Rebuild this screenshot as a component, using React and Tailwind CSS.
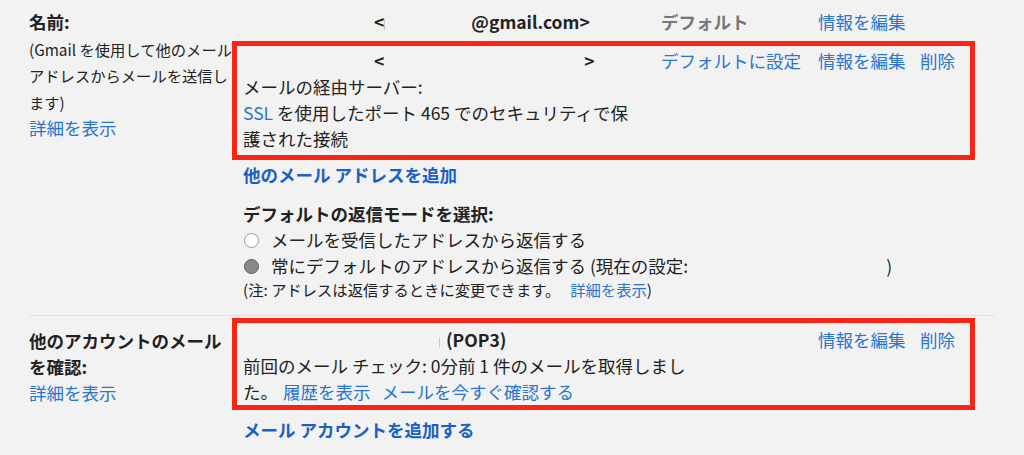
import React from "react";

const LINK = "text-[#2a74d6]";
const BOLDLINK = "text-[#1b5fc9] font-bold";

function Tick() {
  return <span className="inline-block w-px h-[11px] bg-[#c8c8c8] align-middle" />;
}

export default function App() {
  return (
    <div className="min-h-[455px] w-[1024px] bg-[#f2f2f2] font-['Noto_Sans_CJK_JP',sans-serif] text-[#222] pt-[9px] pl-[29px] text-[17.5px] leading-[26px]">
      {/* Section 1 */}
      <div className="flex">
        <div className="w-[203px] shrink-0">
          <div className="font-bold leading-[26.5px]">名前:</div>
          <div className="text-[15.3px] leading-[26.5px]">
            <div>(Gmail を使用して他のメール</div>
            <div>アドレスからメールを送信し</div>
            <div>ます)</div>
          </div>
          <div className={`${LINK} leading-[26.5px]`}>詳細を表示</div>
        </div>
        <div className="flex flex-col">
          {/* Row 1 */}
          <div className="grid grid-cols-[418px_157px_102px_auto] pl-[11px]">
            <div className="whitespace-nowrap font-bold">
              <span className="inline-block w-[131px]" />
              <span>&lt;</span>
              <Tick />
              <span className="inline-block w-[86px]" />
              <span>@gmail.com&gt;</span>
            </div>
            <div className="font-semibold text-[#777]">デフォルト</div>
            <div className={LINK}>情報を編集</div>
            <div />
          </div>
          {/* Box 1 */}
          <div className="mt-[6px] w-[743px] border-[5px] border-[#fb2414] pl-[6px] pt-[2px] pb-[3px]">
            <div className="grid grid-cols-[418px_157px_102px_auto]">
              <div>
                <div className="whitespace-nowrap font-bold">
                  <span className="inline-block w-[131px]" />
                  <span>&lt;</span>
                  <span className="inline-block w-[200px]" />
                  <span>&gt;</span>
                </div>
                <div>メールの経由サーバー:</div>
                <div className="whitespace-nowrap">
                  <span className={LINK}>SSL</span>
                  <span> を使用したポート 465 でのセキュリティで保</span>
                </div>
                <div>護された接続</div>
              </div>
              <div className={`${LINK} whitespace-nowrap`}>デフォルトに設定</div>
              <div className={`${LINK} whitespace-nowrap`}>情報を編集</div>
              <div className={LINK}>削除</div>
            </div>
          </div>
          <div className={`${BOLDLINK} mt-[2px] pl-[11px]`}>他のメール アドレスを追加</div>
          <div className="mt-[13px] pl-[11px]">
            <div className="font-bold">デフォルトの返信モードを選択:</div>
            <div className="flex items-center">
              <span className="ml-px w-[15px] h-[15px] rounded-full border-[1.5px] border-[#9a9a9a] bg-white shrink-0" />
              <span className="ml-[12px]">メールを受信したアドレスから返信する</span>
            </div>
            <div className="flex items-center">
              <span className="ml-px w-[15px] h-[15px] rounded-full border-[1.5px] border-[#5e5e5e] bg-[#8a8a8a] shrink-0" />
              <span className="ml-[12px] whitespace-nowrap">
                常にデフォルトのアドレスから返信する (現在の設定:
                <span className="inline-block w-[198px]" />)
              </span>
            </div>
            <div className="text-[15.3px] leading-[20px] whitespace-nowrap">
              <span>(注: アドレスは返信するときに変更できます。</span>
              <span className={`${LINK} ml-[10px]`}>詳細を表示</span>
              <span>)</span>
            </div>
          </div>
        </div>
      </div>

      {/* Divider */}
      <div className="mt-[16px] w-[966px] h-px bg-[#e2e2e2]" />

      {/* Section 2 */}
      <div className="flex mt-[2px]">
        <div className="w-[203px] shrink-0 pt-[10px]">
          <div className="font-bold">他のアカウントのメール</div>
          <div className="font-bold">を確認:</div>
          <div className={LINK}>詳細を表示</div>
        </div>
        <div className="flex flex-col">
          <div className="w-[743px] border-[5px] border-[#fb2414] pl-[6px] pt-[4px]">
            <div className="grid grid-cols-[575px_102px_auto]">
              <div>
                <div className="whitespace-nowrap font-bold">
                  <span className="inline-block w-[196px]" />
                  <Tick />
                  <span className="ml-[6px]">(POP3)</span>
                </div>
                <div className="whitespace-nowrap">前回のメール チェック: 0分前 1 件のメールを取得しまし</div>
                <div className="whitespace-nowrap">
                  <span>た。</span>
                  <span className={`${LINK} ml-[5px]`}>履歴を表示</span>
                  <span className={`${LINK} ml-[11px]`}>メールを今すぐ確認する</span>
                </div>
              </div>
              <div className={`${LINK} whitespace-nowrap`}>情報を編集</div>
              <div className={LINK}>削除</div>
            </div>
          </div>
          <div className={`${BOLDLINK} mt-[7px] pl-[11px]`}>メール アカウントを追加する</div>
        </div>
      </div>
    </div>
  );
}
